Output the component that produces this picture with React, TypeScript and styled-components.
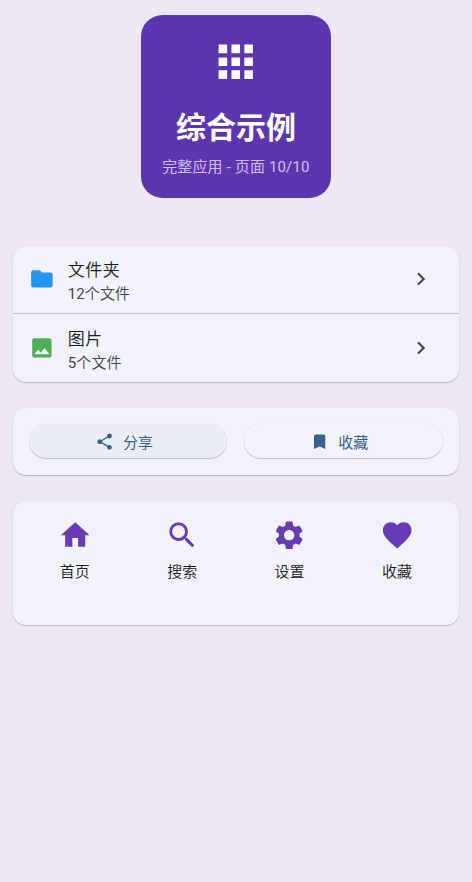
import React from 'react';
import styled, { createGlobalStyle } from 'styled-components';
import {
  MdApps, MdBookmark, MdChevronRight, MdFavorite, MdFolder,
  MdHome, MdImage, MdSearch, MdSettings, MdShare,
} from 'react-icons/md';

const GlobalStyle = createGlobalStyle`
  * { box-sizing: border-box; }
  body {
    margin: 0;
    background: #ede7f6;
    font-family: Roboto, "Noto Sans CJK SC", sans-serif;
    color: #191c20;
  }
  svg { display: block; flex: none; }
`;

const Page = styled.main`
  min-height: 882px;
  padding: 15px 12.8px 0 12.6px;
  display: flex;
  flex-direction: column;
`;

const Hero = styled.header`
  align-self: center;
  width: 190px;
  height: 183.4px;
  margin-bottom: 47.3px;
  padding-top: 21px;
  border-radius: 21.5px;
  background: #5e35b1;
  color: #fff;
  display: flex;
  flex-direction: column;
  align-items: center;
`;

const HeroTitle = styled.h1`
  margin: 18px 0 0;
  font-size: 30px;
  line-height: 44px;
  font-weight: 700;
  white-space: nowrap;
`;

const HeroSubtitle = styled.p`
  margin: 6.5px 0 0;
  font-size: 15px;
  line-height: 22px;
  letter-spacing: 0.15px;
  color: rgba(255, 255, 255, 0.7);
  white-space: nowrap;
`;

const Card = styled.section`
  margin-bottom: 26px;
  border-radius: 13px;
  background: #f2f2fb;
  box-shadow: 0 1px 1px rgba(0, 0, 0, 0.2), 0 0 1px rgba(0, 0, 0, 0.1);
`;

const FileRow = styled.div`
  height: 67.4px;
  padding: 0 25px 0 16.4px;
  display: flex;
  align-items: center;

  & + & {
    height: 68.6px;
    border-top: 1px solid #c3c6cf;
  }
`;

const FileText = styled.div`
  flex: 1;
  margin: 6px 0 0 13px;
`;

const FileName = styled.div`
  font-size: 17px;
  font-weight: 350;
  line-height: 25px;
  letter-spacing: 0.5px;
`;

const FileCount = styled.div`
  font-size: 15px;
  font-weight: 350;
  line-height: 23px;
  letter-spacing: 0.1px;
  color: #43474e;
`;

const Digits = styled.span`
  font-weight: 400;
`;

const Actions = styled(Card)`
  height: 67px;
  padding: 16.6px;
  display: grid;
  grid-template-columns: 1fr 1fr;
  gap: 17px;
  align-items: start;
`;

const ActionButton = styled.button<{ $hovered?: boolean }>`
  height: 34px;
  padding: 0 8.4px 0 0;
  border: 0;
  border-radius: 17px;
  background: ${({ $hovered }) => ($hovered ? '#eaedf5' : '#f2f2fb')};
  box-shadow: 0 1px 1px rgba(0, 0, 0, 0.2), 0 0 1px rgba(0, 0, 0, 0.12);
  display: flex;
  align-items: center;
  justify-content: center;
  gap: 8.5px;
  font-family: Roboto, "Noto Sans CJK SC", sans-serif;
  font-size: 15px;
  font-weight: 400;
  line-height: 22px;
  color: #36618e;
`;

const ActionLabel = styled.span`
  padding-top: 3px;
`;

const Shortcuts = styled(Card)`
  height: 124px;
  padding: 17px 8.5px 0;
  display: grid;
  grid-template-columns: repeat(4, 1fr);
`;

const Shortcut = styled.div`
  display: flex;
  flex-direction: column;
  align-items: center;
  color: #673ab7;
`;

const ShortcutLabel = styled.span`
  margin-top: 9px;
  font-size: 15px;
  font-weight: 350;
  line-height: 22px;
  color: #191c20;
`;

const files = [
  { name: '文件夹', count: 12, Icon: MdFolder, color: '#2196f3' },
  { name: '图片', count: 5, Icon: MdImage, color: '#4caf50' },
];

const shortcuts = [
  { label: '首页', Icon: MdHome },
  { label: '搜索', Icon: MdSearch },
  { label: '设置', Icon: MdSettings },
  { label: '收藏', Icon: MdFavorite },
];

export default function App() {
  return (
    <>
      <GlobalStyle />
      <Page>
        <Hero>
          <MdApps size={51.5} />
          <HeroTitle>综合示例</HeroTitle>
          <HeroSubtitle>完整应用 - 页面 10/10</HeroSubtitle>
        </Hero>
        <Card>
          {files.map(({ name, count, Icon, color }) => (
            <FileRow key={name}>
              <Icon size={25.8} color={color} />
              <FileText>
                <FileName>{name}</FileName>
                <FileCount><Digits>{count}</Digits>个文件</FileCount>
              </FileText>
              <MdChevronRight size={25.8} color="#43474e" />
            </FileRow>
          ))}
        </Card>
        <Actions>
          <ActionButton $hovered>
            <MdShare size={19.3} />
            <ActionLabel>分享</ActionLabel>
          </ActionButton>
          <ActionButton>
            <MdBookmark size={19.3} />
            <ActionLabel>收藏</ActionLabel>
          </ActionButton>
        </Actions>
        <Shortcuts>
          {shortcuts.map(({ label, Icon }) => (
            <Shortcut key={label}>
              <Icon size={34.4} />
              <ShortcutLabel>{label}</ShortcutLabel>
            </Shortcut>
          ))}
        </Shortcuts>
      </Page>
    </>
  );
}
